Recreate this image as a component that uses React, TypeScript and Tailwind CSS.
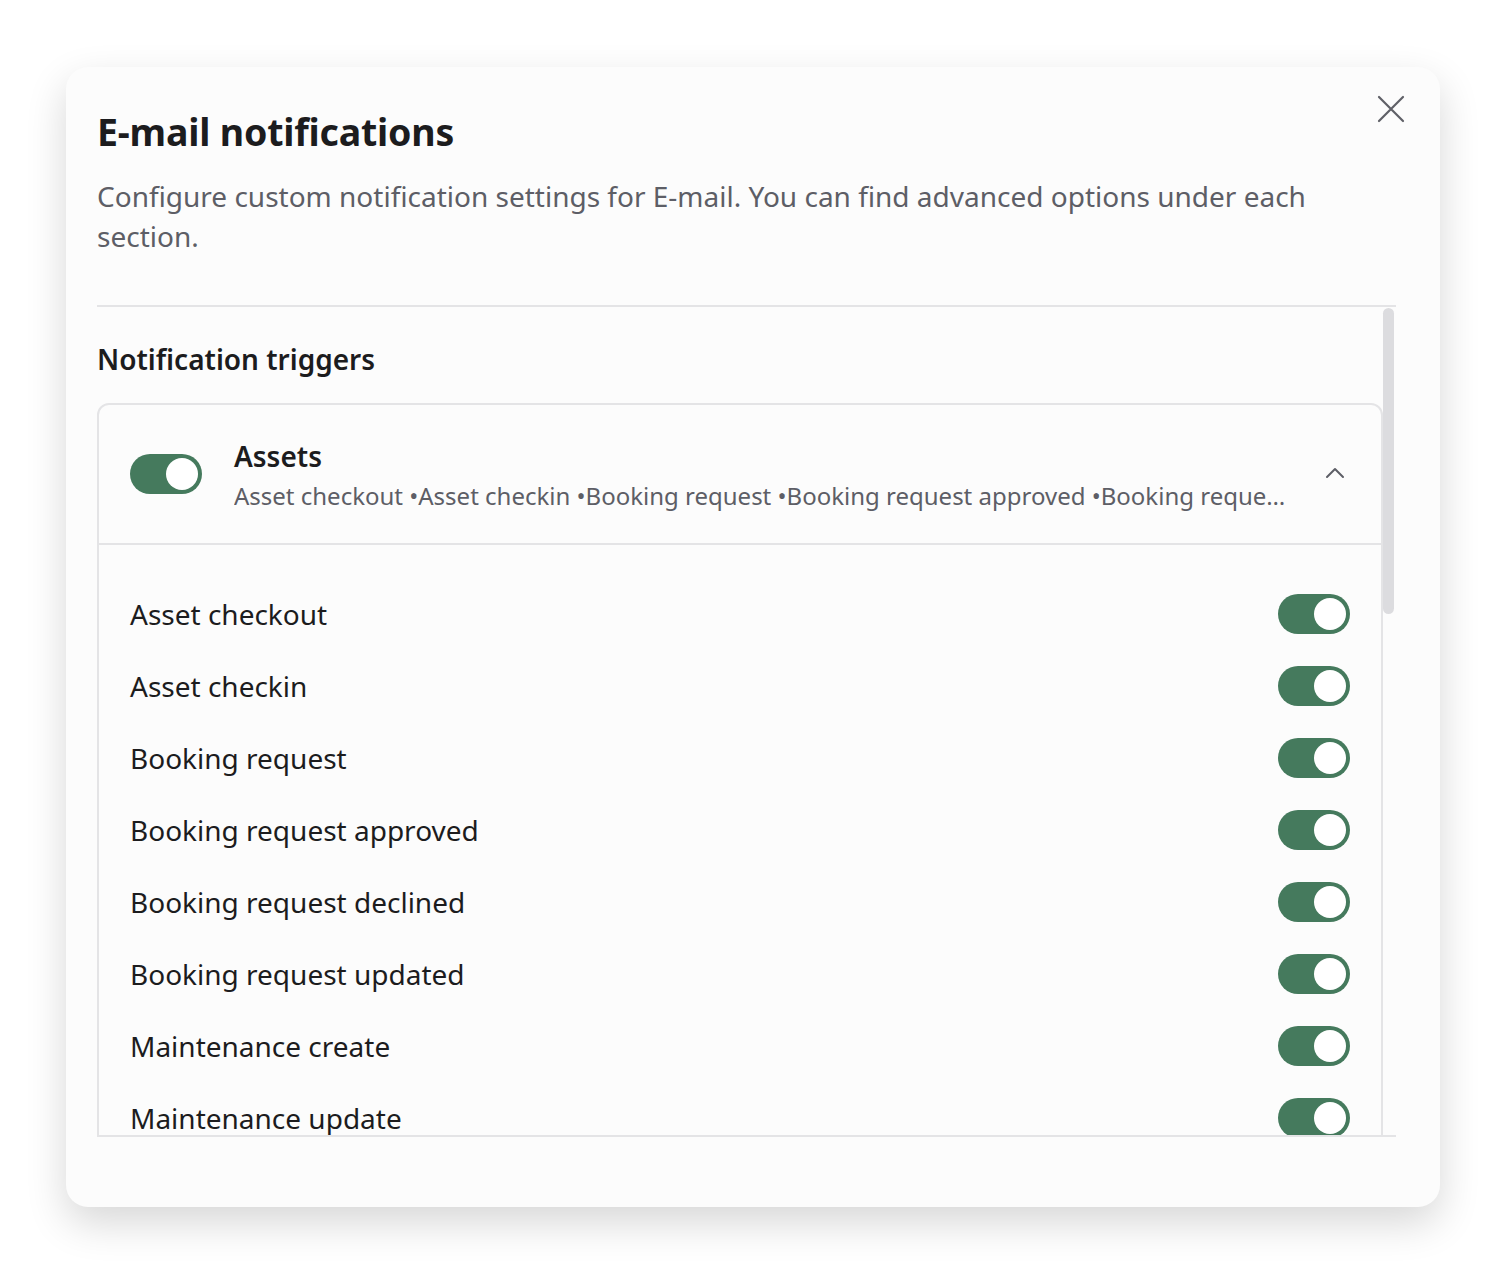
import React from "react";

const items = [
  "Asset checkout",
  "Asset checkin",
  "Booking request",
  "Booking request approved",
  "Booking request declined",
  "Booking request updated",
  "Maintenance create",
  "Maintenance update",
  "Maintenance complete",
];

function Toggle() {
  return (
    <div className="flex h-[40px] w-[72px] shrink-0 items-center justify-end rounded-full bg-[#457a5d] px-[4px]">
      <div className="h-[32px] w-[32px] rounded-full bg-white" />
    </div>
  );
}

export default function App() {
  return (
    <div
      className="min-h-[1273px] w-full bg-white pl-[66px] pt-[67px]"
      style={{ fontFamily: '"Noto Sans", sans-serif' }}
    >
      <div className="relative flex h-[1140px] w-[1374px] flex-col rounded-[22px] bg-[#fcfcfc] pl-[31px] pr-[44px] pt-[41px] pb-[70px] shadow-[0_16px_40px_rgba(0,0,0,0.16)]">
        <button className="absolute right-[34px] top-[27px] flex h-[30px] w-[30px] items-center justify-center text-[#5f6067]">
          <svg width="28" height="28" viewBox="0 0 28 28" fill="none" stroke="currentColor" strokeWidth="2.2" strokeLinecap="round">
            <path d="M2 2 L26 26 M26 2 L2 26" />
          </svg>
        </button>
        <h1 className="text-[37.5px] font-bold leading-[48px] tracking-[-0.2px] text-[#1c1c1e]">E-mail notifications</h1>
        <p className="mt-[20px] pr-[40px] text-[28px] leading-[40px] text-[#5d5e66]">
          Configure custom notification settings for E-mail. You can find advanced options under each section.
        </p>
        <div className="mt-[49px] flex min-h-0 flex-1 border-y-2 border-[#e4e4e6]">
          <div className="min-w-0 flex-1 overflow-hidden">
            <h2 className="mt-[33px] text-[28px] font-semibold leading-[38px] text-[#1c1c1e]">Notification triggers</h2>
            <div className="mt-[25px] rounded-[12px] border-2 border-[#e4e4e6]">
              <div className="flex h-[140px] items-center gap-[32px] border-b-2 border-[#e4e4e6] pl-[31px] pr-[36px]">
                <Toggle />
                <div className="min-w-0 flex-1 pr-[4px] pt-[2px]">
                  <div className="text-[28px] font-semibold leading-[36px] text-[#1c1c1e]">Assets</div>
                  <div className="mt-[5px] truncate text-[24px] leading-[34px] text-[#5d5e66]">
                    Asset checkout •Asset checkin •Booking request •Booking request approved •Booking request declined •Booking request updated •Maintenance create
                  </div>
                </div>
                <svg width="20" height="12" viewBox="0 0 20 12" fill="none" stroke="#5d5e66" strokeWidth="2" strokeLinecap="round" strokeLinejoin="round" className="mt-[-2px]">
                  <path d="M2 10 L10 2 L18 10" />
                </svg>
              </div>
              <div className="flex flex-col pt-[33px] pl-[31px] pr-[31px]">
                {items.map((t) => (
                  <div key={t} className="flex h-[72px] items-center justify-between">
                    <span className="text-[28px] leading-[36px] text-[#1c1c1e]">{t}</span>
                    <Toggle />
                  </div>
                ))}
              </div>
            </div>
          </div>
          <div className="w-[13px] shrink-0 pt-[1px]">
            <div className="h-[306px] w-[11px] rounded-full bg-[#dcdcdf]" />
          </div>
        </div>
      </div>
    </div>
  );
}
